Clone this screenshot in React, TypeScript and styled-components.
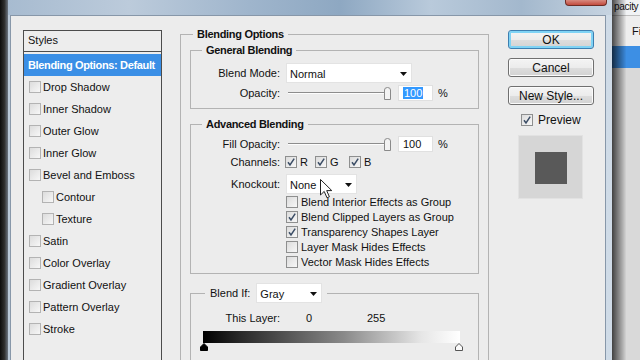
import React, { FC } from 'react';
import styled, { createGlobalStyle } from 'styled-components';

const GlobalStyle = createGlobalStyle`
  html, body {
    margin: 0;
    padding: 0;
  }
  body {
    width: 640px;
    height: 360px;
    overflow: hidden;
    background: #222;
    font-family: 'Liberation Sans', Arial, sans-serif;
    font-size: 11px;
    color: #111;
  }
`;

const Screen = styled.div`
  position: relative;
  display: flex;
  width: 640px;
  height: 360px;
  overflow: hidden;
`;

const BackEdge = styled.div`
  flex: none;
  width: 8px;
  background: linear-gradient(to right, #0c0c0c, #2e2e2e 55%, #6b7480);
`;

const Window = styled.div`
  flex: none;
  width: 604px;
  display: flex;
  flex-direction: column;
  background: #d3dee9;
`;

const TitleBar = styled.div`
  height: 15px;
  flex: none;
  display: flex;
  justify-content: flex-end;
  background: linear-gradient(
    to right,
    #a7bbd0,
    #bccbdb 20%,
    #9fb5cc 40%,
    #8ea8c2 55%,
    #b9cadb 70%,
    #a3b8cd 85%,
    #c7d4e1
  );
`;

const CloseButton = styled.div`
  width: 40px;
  height: 5px;
  margin-right: 5px;
  border: 1px solid #6e2c24;
  border-top: none;
  border-radius: 0 0 4px 4px;
  background: linear-gradient(#d88a7f, #c24b3e);
`;

const Frame = styled.div`
  flex: 1;
  display: flex;
  padding: 0 6px 0 2px;
  background: linear-gradient(to right, #b9c8d8, #dbe4ee 30%, #cfdbe7);
`;

const Client = styled.div`
  flex: 1;
  display: flex;
  align-items: flex-start;
  padding: 12px 0 0 12px;
  border: 1px solid #8797a9;
  border-bottom: none;
  background: #ececec;
`;

/* ---------- styles list ---------- */

const StylesPanel = styled.div`
  flex: none;
  width: 139px;
  height: 340px;
  margin-top: 2px;
  box-sizing: border-box;
  border: 1px solid #4c4c4c;
  background: #ededed;
`;

const PanelHeader = styled.div`
  height: 21px;
  display: flex;
  align-items: center;
  padding: 0 0 3px 4px;
  box-sizing: border-box;
  border-bottom: 1px solid #4c4c4c;
  margin-bottom: 2px;
`;

const StyleItem = styled.div<{ $indent?: boolean; $active?: boolean }>`
  height: 22px;
  display: flex;
  align-items: center;
  gap: 2px;
  padding-left: ${({ $indent, $active }) => ($active ? 4 : $indent ? 18 : 5)}px;
  background: ${({ $active }) => ($active ? '#3a8fe6' : 'transparent')};
  color: ${({ $active }) => ($active ? '#fff' : '#111')};
  font-weight: ${({ $active }) => ($active ? 'bold' : 'normal')};
  letter-spacing: ${({ $active }) => ($active ? '-0.35px' : '0')};
`;

const Box = styled.span<{ $faint?: boolean }>`
  flex: none;
  width: 12px;
  height: 12px;
  box-sizing: border-box;
  display: inline-flex;
  align-items: center;
  justify-content: center;
  border: 1px solid ${({ $faint }) => ($faint ? '#b3b3b3' : '#8e8f8f')};
  background: linear-gradient(135deg, #dcdcdc, #f7f7f7);
`;

const CheckBox: FC<{ checked?: boolean; faint?: boolean }> = ({ checked, faint }) => (
  <Box $faint={faint}>
    {checked && (
      <svg width="10" height="10" viewBox="0 0 10 10">
        <path d="M2 5.2 L4 8 L8.2 1.6" fill="none" stroke="#3b4d66" strokeWidth="1.5" />
      </svg>
    )}
  </Box>
);

/* ---------- main column ---------- */

const Main = styled.div`
  flex: none;
  width: 309px;
  margin-left: 18px;
`;

const Group = styled.fieldset<{ $gap?: number }>`
  margin: ${({ $gap }) => $gap ?? 0}px 0 0 0;
  padding: 0;
  min-width: 0;
  border: 1px solid #b3b3b3;
`;

const Legend = styled.legend<{ $offset: number }>`
  margin-left: ${({ $offset }) => $offset}px;
  padding: 0 4px;
  line-height: 13px;
  font-weight: bold;
  letter-spacing: -0.3px;
`;

const FormLegend = styled.legend`
  margin-left: 14px;
  padding: 0 5px;
  display: flex;
  align-items: center;
  gap: 5px;
`;

const OuterBody = styled.div`
  padding: 3px 9px 0 9px;
`;

const GroupBody = styled.div<{ $top: number; $bottom: number }>`
  padding: ${({ $top, $bottom }) => `${$top}px 0 ${$bottom}px 0`};
  display: flex;
  flex-direction: column;
`;

const Row = styled.div<{ $h: number; $mt?: number }>`
  height: ${({ $h }) => $h}px;
  margin-top: ${({ $mt }) => $mt ?? 0}px;
  display: grid;
  grid-template-columns: 89px auto;
  column-gap: 5px;
  align-items: center;
`;

const Label = styled.span`
  text-align: right;
  white-space: nowrap;
`;

const Controls = styled.div`
  display: flex;
  align-items: center;
`;

const Select = styled.div<{ $w: number }>`
  width: ${({ $w }) => $w}px;
  height: 20px;
  margin-left: 1px;
  box-sizing: border-box;
  display: flex;
  align-items: center;
  justify-content: space-between;
  padding: 1px 4px 0 3px;
  background: #fff;
  border: 1px solid #e3e3e3;
`;

const Arrow = () => (
  <svg width="7" height="4" viewBox="0 0 7 4">
    <polygon points="0,0 7,0 3.5,4" fill="#111" />
  </svg>
);

const Track = styled.div`
  width: 96px;
  margin-left: 3px;
  border-top: 1px solid #8d8d8d;
  border-bottom: 1px solid #fdfdfd;
`;

const Thumb = () => (
  <svg width="9" height="13" viewBox="0 0 9 13" style={{ marginLeft: -1 }}>
    <path d="M1.5 3 Q1.5 0.5 4.5 0.5 Q7.5 0.5 7.5 3 L7.5 12.5 L1.5 12.5 Z" fill="#f3f3f3" stroke="#8a8a8a" />
  </svg>
);

const NumberBox = styled.div`
  width: 35px;
  height: 16px;
  margin-left: 6px;
  box-sizing: border-box;
  display: flex;
  align-items: center;
  padding-left: 4px;
  background: #fff;
  border: 1px solid #e0e0e0;
`;

const Selected = styled.span`
  background: #3399ff;
  color: #fff;
  padding: 0 1px;
`;

const Percent = styled.span`
  margin-left: 5px;
`;

const Channel = styled.label<{ $w?: number }>`
  display: flex;
  align-items: center;
  gap: 3px;
  width: ${({ $w }) => ($w ? `${$w}px` : 'auto')};
`;

const CheckList = styled.div`
  margin-left: 95px;
  display: flex;
  flex-direction: column;
`;

const CheckRow = styled.label`
  height: 15px;
  display: flex;
  align-items: center;
  gap: 3px;
`;

const Values = styled.div`
  display: flex;
  padding-left: 21px;
`;

const Value = styled.span<{ $w?: number }>`
  width: ${({ $w }) => ($w ? `${$w}px` : 'auto')};
`;

const GradientBar = styled.div`
  width: 257px;
  height: 12px;
  margin: 6px 0 0 12px;
  background: linear-gradient(to right, #000, #2a2a2a 15%, #8a8a8a 55%, #e6e6e6 85%, #fff);
`;

const Markers = styled.div`
  width: 263px;
  margin-left: 9px;
  display: flex;
  justify-content: space-between;
`;

const Marker: FC<{ dark?: boolean }> = ({ dark }) => (
  <svg width="8" height="8" viewBox="0 0 8 8">
    <polygon
      points="4,0.5 7.5,4 7.5,7.5 0.5,7.5 0.5,4"
      fill={dark ? '#000' : '#fafafa'}
      stroke={dark ? '#000' : '#555'}
    />
  </svg>
);

/* ---------- right column ---------- */

const Side = styled.div`
  flex: none;
  width: 86px;
  margin: 2px 0 0 19px;
  display: flex;
  flex-direction: column;
  gap: 9px;
`;

const Button = styled.button<{ $primary?: boolean }>`
  height: 19px;
  padding: 0;
  font-family: 'Liberation Sans', Arial, sans-serif;
  font-size: 12px;
  color: #111;
  border: 1px solid ${({ $primary }) => ($primary ? '#3c7fb1' : '#707070')};
  border-radius: 3px;
  background: linear-gradient(#f4f4f4, #ececec 50%, #dedede 51%, #d2d2d2);
  box-shadow: ${({ $primary }) =>
    $primary ? 'inset 0 0 0 2px #7fd3f5' : 'inset 0 0 0 1px #fbfbfb'};
`;

const PreviewToggle = styled.label`
  display: flex;
  align-items: center;
  gap: 5px;
  margin: -1px 0 0 13px;
  font-size: 12px;
`;

const Swatch = styled.div`
  width: 65px;
  height: 64px;
  margin: -1px 0 0 10px;
  box-sizing: border-box;
  display: flex;
  align-items: center;
  justify-content: center;
  background: #d6d6d6;
  border: 1px solid #e2e2e2;
`;

const SwatchFill = styled.div`
  width: 32px;
  height: 32px;
  margin-top: 2px;
  background: #595959;
`;

/* ---------- window behind ---------- */

const BackWindow = styled.div`
  position: relative;
  flex: 1;
  display: flex;
  flex-direction: column;
  background: #d9d9d9;
  &::after {
    content: '';
    position: absolute;
    inset: 0;
    background: linear-gradient(to right, rgba(0, 0, 0, 0.7), rgba(0, 0, 0, 0.15) 40%, transparent 50%);
    pointer-events: none;
  }
`;

const BackTab = styled.div`
  height: 15px;
  padding-left: 2px;
  background: #f1f3f5;
  white-space: nowrap;
  font-size: 10px;
  letter-spacing: -0.3px;
  line-height: 14px;
`;

const BackHead = styled.div`
  height: 30px;
  padding-left: 20px;
  display: flex;
  align-items: center;
  background: #eeeeee;
  border-top: 1px solid #bfbfbf;
`;

const BackSelection = styled.div`
  height: 22px;
  background: #3d8fe4;
`;

const Cursor = styled.svg`
  position: absolute;
  left: 320px;
  top: 179px;
`;

const styleItems: { label: string; indent?: boolean }[] = [
  { label: 'Drop Shadow' },
  { label: 'Inner Shadow' },
  { label: 'Outer Glow' },
  { label: 'Inner Glow' },
  { label: 'Bevel and Emboss' },
  { label: 'Contour', indent: true },
  { label: 'Texture', indent: true },
  { label: 'Satin' },
  { label: 'Color Overlay' },
  { label: 'Gradient Overlay' },
  { label: 'Pattern Overlay' },
  { label: 'Stroke' },
];

const advancedChecks = [
  { label: 'Blend Interior Effects as Group', checked: false },
  { label: 'Blend Clipped Layers as Group', checked: true },
  { label: 'Transparency Shapes Layer', checked: true },
  { label: 'Layer Mask Hides Effects', checked: false },
  { label: 'Vector Mask Hides Effects', checked: false },
];

export default function App() {
  return (
    <>
      <GlobalStyle />
      <Screen>
        <BackEdge />
        <Window>
          <TitleBar>
            <CloseButton />
          </TitleBar>
          <Frame>
            <Client>
              <StylesPanel>
                <PanelHeader>Styles</PanelHeader>
                <StyleItem $active>Blending Options: Default</StyleItem>
                {styleItems.map(({ label, indent }) => (
                  <StyleItem key={label} $indent={indent}>
                    <CheckBox faint />
                    {label}
                  </StyleItem>
                ))}
              </StylesPanel>

              <Main>
                <Group>
                  <Legend $offset={12}>Blending Options</Legend>
                  <OuterBody>
                    <Group>
                      <Legend $offset={11}>General Blending</Legend>
                      <GroupBody $top={6} $bottom={7}>
                        <Row $h={20}>
                          <Label>Blend Mode:</Label>
                          <Select $w={126}>
                            Normal
                            <Arrow />
                          </Select>
                        </Row>
                        <Row $h={16} $mt={2}>
                          <Label>Opacity:</Label>
                          <Controls>
                            <Track />
                            <Thumb />
                            <NumberBox>
                              <Selected>100</Selected>
                            </NumberBox>
                            <Percent>%</Percent>
                          </Controls>
                        </Row>
                      </GroupBody>
                    </Group>

                    <Group $gap={9}>
                      <Legend $offset={11}>Advanced Blending</Legend>
                      <GroupBody $top={5} $bottom={4}>
                        <Row $h={16}>
                          <Label>Fill Opacity:</Label>
                          <Controls>
                            <Track />
                            <Thumb />
                            <NumberBox>100</NumberBox>
                            <Percent>%</Percent>
                          </Controls>
                        </Row>
                        <Row $h={14} $mt={3}>
                          <Label>Channels:</Label>
                          <Controls>
                            <Channel $w={30}>
                              <CheckBox checked />R
                            </Channel>
                            <Channel $w={34}>
                              <CheckBox checked />G
                            </Channel>
                            <Channel>
                              <CheckBox checked />B
                            </Channel>
                          </Controls>
                        </Row>
                        <Row $h={20} $mt={5}>
                          <Label>Knockout:</Label>
                          <Select $w={71}>
                            None
                            <Arrow />
                          </Select>
                        </Row>
                        <CheckList>
                          {advancedChecks.map(({ label, checked }) => (
                            <CheckRow key={label}>
                              <CheckBox checked={checked} />
                              {label}
                            </CheckRow>
                          ))}
                        </CheckList>
                      </GroupBody>
                    </Group>

                    <Group $gap={9}>
                      <FormLegend>
                        Blend If:
                        <Select $w={66}>
                          Gray
                          <Arrow />
                        </Select>
                      </FormLegend>
                      <GroupBody $top={8} $bottom={20}>
                        <Row $h={14}>
                          <Label>This Layer:</Label>
                          <Values>
                            <Value $w={61}>0</Value>
                            <Value>255</Value>
                          </Values>
                        </Row>
                        <GradientBar />
                        <Markers>
                          <Marker dark />
                          <Marker />
                        </Markers>
                      </GroupBody>
                    </Group>
                  </OuterBody>
                </Group>
              </Main>

              <Side>
                <Button $primary>OK</Button>
                <Button>Cancel</Button>
                <Button>New Style...</Button>
                <PreviewToggle>
                  <CheckBox checked />
                  Preview
                </PreviewToggle>
                <Swatch>
                  <SwatchFill />
                </Swatch>
              </Side>
            </Client>
          </Frame>
        </Window>

        <BackWindow>
          <BackTab>pacity</BackTab>
          <BackHead>Fi</BackHead>
          <BackSelection />
        </BackWindow>

        <Cursor width="13" height="20" viewBox="0 0 13 20">
          <path
            d="M0.5 0.5 L0.5 16 L4.2 12.4 L7 18.8 L9.4 17.8 L6.7 11.6 L11.8 11.6 Z"
            fill="#fff"
            stroke="#222"
            strokeWidth="1"
          />
        </Cursor>
      </Screen>
    </>
  );
}
